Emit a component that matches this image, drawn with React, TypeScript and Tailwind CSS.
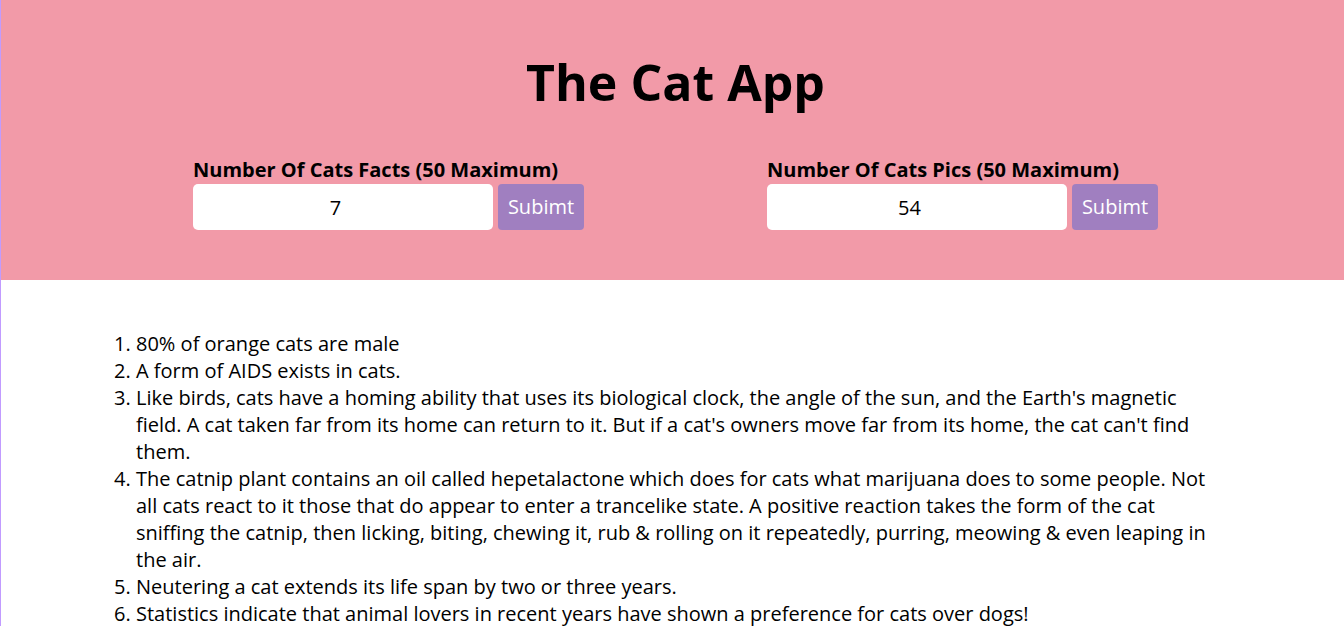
import React, { useState } from "react";

const facts = [
  "80% of orange cats are male",
  "A form of AIDS exists in cats.",
  "Like birds, cats have a homing ability that uses its biological clock, the angle of the sun, and the Earth's magnetic field. A cat taken far from its home can return to it. But if a cat's owners move far from its home, the cat can't find them.",
  "The catnip plant contains an oil called hepetalactone which does for cats what marijuana does to some people. Not all cats react to it those that do appear to enter a trancelike state. A positive reaction takes the form of the cat sniffing the catnip, then licking, biting, chewing it, rub & rolling on it repeatedly, purring, meowing & even leaping in the air.",
  "Neutering a cat extends its life span by two or three years.",
  "Statistics indicate that animal lovers in recent years have shown a preference for cats over dogs!",
];

function CountForm({ label, initial }: { label: string; initial: string }) {
  const [value, setValue] = useState(initial);
  return (
    <div className="flex flex-col">
      <label className="text-[20px] font-bold leading-[27px] text-black">{label}</label>
      <div className="mt-[1px] flex gap-[5px]">
        <input
          type="text"
          value={value}
          onChange={(e) => setValue(e.target.value)}
          className="h-[46px] w-[300px] rounded-[5px] bg-white pr-[15px] text-center text-[20px] text-black outline-none"
        />
        <button className="h-[46px] w-[86px] rounded-[4px] bg-[#a07fc0] text-[20px] text-white">
          Subimt
        </button>
      </div>
    </div>
  );
}

export default function App() {
  return (
    <div
      className="min-h-screen border-l border-[#c19bff] bg-white text-black"
      style={{ fontFamily: '"Open Sans", sans-serif' }}
    >
      <header className="flex h-[280px] flex-col bg-[#f29aa8] pt-[48px]">
        <h1 className="pl-[6px] text-center text-[50px] font-bold leading-[68px]">The Cat App</h1>
        <div className="mt-[40px] flex gap-[183px] pl-[192px]">
          <CountForm label="Number Of Cats Facts (50 Maximum)" initial="7" />
          <CountForm label="Number Of Cats Pics (50 Maximum)" initial="54" />
        </div>
      </header>

      <div className="pt-[50px] pl-[95px] pr-[128px]">
        <ol className="list-decimal pl-[40px] text-[20px] leading-[27px]">
          {facts.map((f, i) => (
            <li key={i}>{f}</li>
          ))}
        </ol>
      </div>
    </div>
  );
}
